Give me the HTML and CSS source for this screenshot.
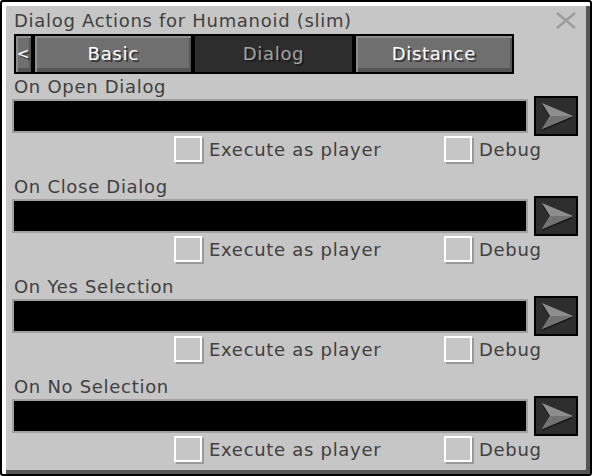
FILE: index.html
```html
<!DOCTYPE html>
<html lang="en">
<head>
  <meta charset="UTF-8" />
  <title>Dialog Actions for Humanoid (slim)</title>
  <link rel="stylesheet" href="styles.css">
</head>
<body>
  <div class="window">
    <div class="title-row">
      <span class="title">Dialog Actions for Humanoid (slim)</span>
      <svg class="close" width="20" height="17" viewBox="0 0 20 17">
        <line x1="1" y1="1" x2="19" y2="16" />
        <line x1="19" y1="1" x2="1" y2="16" />
      </svg>
    </div>

    <div class="tabs">
      <div class="tab tab-arrow">&lt;</div>
      <div class="tab">Basic</div>
      <div class="tab tab-active">Dialog</div>
      <div class="tab">Distance</div>
    </div>

    <div class="section">
      <div class="label">On Open Dialog</div>
      <div class="row">
        <div class="field"></div>
        <div class="send">
          <svg width="40" height="36" viewBox="0 0 40 36">
            <polygon class="arrow-shadow" points="6,7 37,20 6,33 14,20" />
            <polygon class="arrow" points="6,5 37,18 6,31 14,18" />
            <polygon class="arrow-dark" points="14,18 37,18 6,31" />
          </svg>
        </div>
      </div>
      <div class="checks">
        <div class="check check-wide"><span class="box"></span>Execute as player</div>
        <div class="check"><span class="box"></span>Debug</div>
      </div>
    </div>

    <div class="section">
      <div class="label">On Close Dialog</div>
      <div class="row">
        <div class="field"></div>
        <div class="send">
          <svg width="40" height="36" viewBox="0 0 40 36">
            <polygon class="arrow-shadow" points="6,7 37,20 6,33 14,20" />
            <polygon class="arrow" points="6,5 37,18 6,31 14,18" />
            <polygon class="arrow-dark" points="14,18 37,18 6,31" />
          </svg>
        </div>
      </div>
      <div class="checks">
        <div class="check check-wide"><span class="box"></span>Execute as player</div>
        <div class="check"><span class="box"></span>Debug</div>
      </div>
    </div>

    <div class="section">
      <div class="label">On Yes Selection</div>
      <div class="row">
        <div class="field"></div>
        <div class="send">
          <svg width="40" height="36" viewBox="0 0 40 36">
            <polygon class="arrow-shadow" points="6,7 37,20 6,33 14,20" />
            <polygon class="arrow" points="6,5 37,18 6,31 14,18" />
            <polygon class="arrow-dark" points="14,18 37,18 6,31" />
          </svg>
        </div>
      </div>
      <div class="checks">
        <div class="check check-wide"><span class="box"></span>Execute as player</div>
        <div class="check"><span class="box"></span>Debug</div>
      </div>
    </div>

    <div class="section">
      <div class="label">On No Selection</div>
      <div class="row">
        <div class="field"></div>
        <div class="send">
          <svg width="40" height="36" viewBox="0 0 40 36">
            <polygon class="arrow-shadow" points="6,7 37,20 6,33 14,20" />
            <polygon class="arrow" points="6,5 37,18 6,31 14,18" />
            <polygon class="arrow-dark" points="14,18 37,18 6,31" />
          </svg>
        </div>
      </div>
      <div class="checks">
        <div class="check check-wide"><span class="box"></span>Execute as player</div>
        <div class="check"><span class="box"></span>Debug</div>
      </div>
    </div>
  </div>
</body>
</html>
```

FILE: styles.css
```css
* {
  margin: 0;
  padding: 0;
  box-sizing: border-box;
}

body {
  background: #fff;
  font-family: 'DejaVu Sans', sans-serif;
  font-size: 18px;
  letter-spacing: 0.7px;
  line-height: 16px;
  color: #404040;
}

.window {
  width: 592px;
  height: 476px;
  border: 2px solid #000;
  border-radius: 3px;
  background: #c6c6c6;
  box-shadow: inset 4px 4px 0 #fff, inset -4px -4px 0 #555;
  padding: 11px 10px 0 10px;
}

.title-row {
  display: flex;
  justify-content: space-between;
  align-items: flex-start;
  height: 16px;
  padding-left: 2px;
}

.close {
  margin: -1px 4px 0 0;
}

.close line {
  stroke: #9c9c9c;
  stroke-width: 2.5;
}

.tabs {
  display: flex;
  gap: 4px;
  width: 500px;
  height: 40px;
  margin: 5px 0 0 2px;
  padding: 2px;
  background: #000;
}

.tab {
  flex: 1;
  display: flex;
  align-items: center;
  justify-content: center;
  padding-bottom: 1px;
  background: #6f6f6f;
  box-shadow: inset 2px 2px 0 #8d8d8d, inset -2px -4px 0 #555;
  color: #fff;
  text-shadow: 2px 2px 0 #383838;
}

.tab-arrow {
  flex: none;
  width: 15px;
  font-size: 15px;
}

.tab-active {
  background: #2d2d2d;
  box-shadow: none;
  color: #a0a0a0;
  text-shadow: 2px 2px 0 #1e1e1e;
}

.section {
  margin-top: 15px;
}

.tabs + .section {
  margin-top: 5px;
}

.label {
  padding-left: 2px;
}

.row {
  display: flex;
  align-items: center;
  gap: 6px;
  height: 40px;
  margin-top: 1px;
  padding-right: 2px;
}

.field {
  flex: 1;
  height: 34px;
  border: 2px solid #a0a0a0;
  background: #000;
}

.send {
  width: 44px;
  height: 40px;
  border: 2px solid #000;
  background: #2e2e2e;
}

.send svg {
  display: block;
}

.arrow-shadow {
  fill: #1a1a1a;
}

.arrow {
  fill: #8e8e8e;
}

.arrow-dark {
  fill: #727272;
}

.checks {
  display: flex;
  height: 28px;
  padding-left: 162px;
}

.check {
  display: flex;
  align-items: center;
  gap: 7px;
}

.check-wide {
  width: 270px;
}

.box {
  width: 28px;
  height: 26px;
  margin-bottom: 2px;
  border: 2px solid #fff;
  box-shadow: 2px 2px 0 #999;
}
```
